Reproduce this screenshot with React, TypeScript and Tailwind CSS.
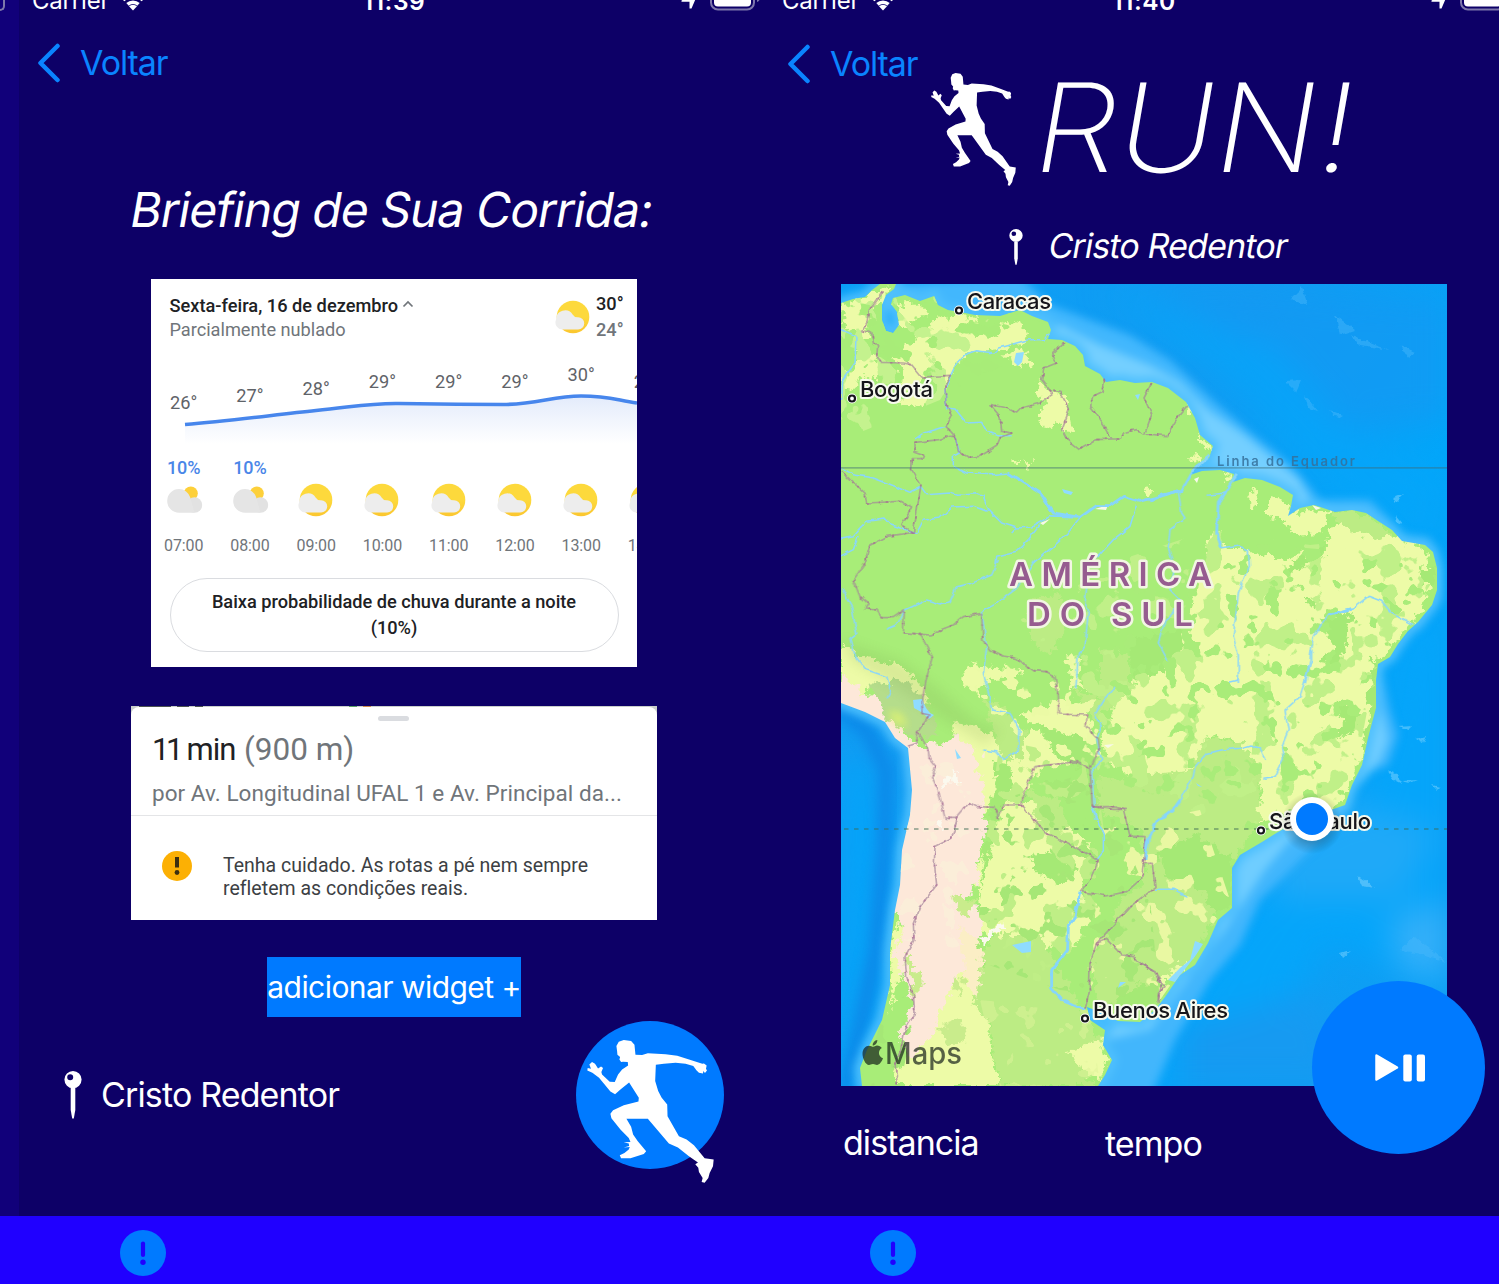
import React from "react";

const RUNNER =
  "M170 125L168 110L175 97L190 92L212 95L222 106L225 136L245 137L262 132L315 135L350 139L390 152L425 163L430 162L438 168L436 178L439 183L433 191L428 185L427 192L415 190L408 183L398 170L375 163L345 160L310 163L286 166L284 215L293 245L303 264L320 285L321 320L355 380L378 390L400 407L432 446L459 450L457 470L447 490L443 505L432 519L423 517L426 505L415 487L413 474L404 464L412 459L385 440L352 414L325 402L262 328L198 328L212 352L218 375L232 395L257 425L250 433L210 446L182 446L178 437L192 430L205 420L208 412L190 414L206 409L205 402L190 398L210 397L205 385L180 360L153 326L150 313L158 302L190 287L234 276L235 265L206 219L180 240L164 254L150 246L116 205L96 190L81 183L82 176L92 178L87 165L95 158L104 163L113 177L122 171L128 176L123 188L125 195L148 217L163 218L173 195L185 180L203 168L202 158L188 157L182 158L177 150L179 143L171 136Z";

function Runner({ className }: { className: string }) {
  return (
    <svg viewBox="80 92 380 428" preserveAspectRatio="none" className={className}>
      <path d={RUNNER} fill="#fff" />
    </svg>
  );
}

function Pin({ className }: { className: string }) {
  return (
    <svg viewBox="0 0 18 48" preserveAspectRatio="none" className={className} fill="#fff">
      <path fillRule="evenodd" d="M9 0a8.6 8.6 0 1 1 0 17.2A8.6 8.6 0 0 1 9 0ZM6.2 3.2a3 3 0 1 0 0 6a3 3 0 0 0 0-6Z" />
      <path d="M6.7 17h4.6v22L9.8 47.5H8.2L6.7 39Z" />
    </svg>
  );
}

function StatusBar({ time }: { time: string }) {
  return (
    <div className="flex h-6 w-[751px] shrink-0 items-start text-white">
      <span className="mt-[-13px] ml-[13px] w-[78px] text-[24px] leading-[28px] tracking-[-0.2px]">Carrier</span>
      <svg viewBox="0 0 28 20" className="ml-[9px] mt-[-9px] h-5 w-7" fill="none" stroke="#fff">
        <path d="M4 9a14 14 0 0 1 20 0" strokeWidth="3.8" />
        <path d="M8.500 13.400a8 8 0 0 1 11 0" strokeWidth="3.6" />
        <path d="M14 19.500l-4-4.300a6 6 0 0 1 8 0z" fill="#fff" stroke="none" />
      </svg>
      <span className="mt-[-13px] ml-[212px] w-[70px] text-center text-[24.500px] font-semibold leading-[28px] tracking-[0.5px]">{time}</span>
      <svg viewBox="0 0 20 20" className="ml-[251px] mt-[-11px] h-5 w-5" fill="#fff">
        <path d="M19 2L11.500 19.500H9.500V12.800H1.500V11.500L19 2z" />
      </svg>
      <svg viewBox="0 0 52 26" className="ml-[10px] mt-[-15px] h-[26px] w-[52px]">
        <rect x="1" y="1" width="43" height="23.500" rx="7" fill="none" stroke="#7d77ab" strokeWidth="2" />
        <rect x="4" y="4" width="37" height="17.500" rx="4" fill="#fff" />
        <path d="M47 8v9q3-1 3-4.500T47 8" fill="#7d77ab" />
      </svg>
    </div>
  );
}

function BackButton() {
  return (
    <div className="flex h-20 shrink-0 items-center text-[#0a84ff]">
      <svg viewBox="0 0 24 40" className="ml-[18px] h-10 w-6" fill="none" stroke="currentColor" strokeWidth="4.500" strokeLinecap="round" strokeLinejoin="round">
        <path d="M20.500 3L3.500 20L20.500 37" />
      </svg>
      <span className="ml-[19px] text-[34px] leading-10 tracking-[-1.1px]">Voltar</span>
    </div>
  );
}

function PartlyCloudy() {
  return (
    <svg viewBox="0 0 36 36" className="size-9 shrink-0">
      <defs>
        <linearGradient id="sun" x1="0" y1="0" x2="0" y2="1">
          <stop offset="0.500" stopColor="#fdd93c" />
          <stop offset="1" stopColor="#fbc62f" />
        </linearGradient>
      </defs>
      <circle cx="18" cy="18" r="16.300" fill="url(#sun)" />
      <path d="M7.600 30.500a7 7 0 0 1-6.500-10a9 9 0 0 1 16.500-5q2 3.200 5.500 2.700a6 6 0 0 1 0 12.300z" fill="#ededed" />
    </svg>
  );
}

function MostlyCloudy() {
  return (
    <svg viewBox="0 0 36 36" className="size-9 shrink-0 overflow-visible">
      <circle cx="24.800" cy="11.500" r="7" fill="#fdd03a" />
      <circle cx="28.500" cy="23" r="7.700" fill="#e2e2e2" />
      <path d="M13 7.100a11.800 11.800 0 0 1 11.300 8.500l4.200 15.100H13a11.800 11.800 0 1 1 0-23.600z" fill="#e5e5e5" />
    </svg>
  );
}

const HOURS = [
  { t: "26°", y: "mt-[42px]", rain: "10%", hour: "07:00", cloudy: true },
  { t: "27°", y: "mt-[35px]", rain: "10%", hour: "08:00", cloudy: true },
  { t: "28°", y: "mt-[28px]", rain: "", hour: "09:00" },
  { t: "29°", y: "mt-[21px]", rain: "", hour: "10:00" },
  { t: "29°", y: "mt-[21px]", rain: "", hour: "11:00" },
  { t: "29°", y: "mt-[21px]", rain: "", hour: "12:00" },
  { t: "30°", y: "mt-[14px]", rain: "", hour: "13:00" },
  { t: "29°", y: "mt-[21px]", rain: "", hour: "14:00" },
];

function WeatherCard() {
  return (
    <section className="ml-[132px] h-[388px] w-[486px] shrink-0 overflow-hidden bg-white font-['Roboto',sans-serif] text-[#202124]">
      <div className="flex h-[71px] pl-[18.500px] pt-[15px]">
        <div>
          <div className="flex items-center text-[18.200px] font-medium leading-[24px] tracking-[0.02px]">
            Sexta-feira, 16 de dezembro
            <svg viewBox="0 0 12 8" className="mb-1 ml-1 h-2 w-3" fill="none" stroke="#70757a" strokeWidth="1.700">
              <path d="M1.500 6.500L6 2L10.500 6.500" />
            </svg>
          </div>
          <div className="text-[18.200px] leading-[23px] tracking-[-0.02px] text-[#70757a]">Parcialmente nublado</div>
        </div>
        <div className="ml-auto flex pr-[13px]">
          <div className="mt-[5px] mr-[5px]"><PartlyCloudy /></div>
          <div className="w-7 text-[18.200px] font-medium leading-[26px] -mt-[3px]">
            <div>30°</div>
            <div className="text-[#70757a]">24°</div>
          </div>
        </div>
      </div>
      <div className="relative h-[215px]">
        <svg viewBox="0 0 486 90" className="absolute left-0 top-6 h-[90px] w-[486px]">
          <defs>
            <linearGradient id="chartFill" x1="0" y1="0" x2="0" y2="1">
              <stop offset="0" stopColor="#e3ebfb" />
              <stop offset="1" stopColor="#ffffff" />
            </linearGradient>
          </defs>
          <path d="M34 50.500C78 47 122 41 165 36.500S220 29 248 29.500S320 30.500 352 30.500C385 30.500 402 22 430 22S465 26 486 29V70H34Z" fill="url(#chartFill)" />
          <path d="M34 50.500C78 47 122 41 165 36.500S220 29 248 29.500S320 30.500 352 30.500C385 30.500 402 22 430 22S465 26 486 29" fill="none" stroke="#4786ec" strokeWidth="3.600" />
        </svg>
        <div className="relative -ml-[0.400px] flex">
          {HOURS.map((h) => (
            <div key={h.hour} className="flex w-[66.250px] shrink-0 flex-col items-center">
              <div className="h-[107px]">
                <div className={`${h.y} text-[18.200px] leading-[22px] text-[#5f6368]`}>{h.t}</div>
              </div>
              <div className="h-[25px] text-[18px] font-medium leading-[22px] text-[#4a86e8]">{h.rain}</div>
              {h.cloudy ? <MostlyCloudy /> : <PartlyCloudy />}
              <div className="mt-[18px] text-[16px] leading-5 tracking-[-0.1px] text-[#70757a]">{h.hour}</div>
            </div>
          ))}
        </div>
      </div>
      <div className="mx-[18.500px] mt-[13px] flex h-[74px] items-center justify-center rounded-full border border-[#dadce0] px-10 text-center text-[18.200px] font-medium leading-[26px]">
        <div className="w-[376px]">Baixa probabilidade de chuva durante a noite (10%)</div>
      </div>
    </section>
  );
}

function RouteCard() {
  return (
    <section className="ml-[112px] mt-[39px] h-[214px] w-[526px] shrink-0 overflow-hidden bg-[#c9cfcb] font-['Roboto',sans-serif]">
      <div className="flex h-px gap-1.5 pl-2">
        <i className="w-8 bg-[#4b5250]" />
        <i className="w-3 bg-[#4b5250]" />
        <i className="w-2 bg-[#4b5250]" />
        <i className="ml-[140px] w-2 bg-[#58a065]" />
        <i className="w-2 bg-[#d08a4a]" />
      </div>
      <div className="h-[213px] rounded-t-[8px] bg-white">
        <div className="flex h-[109px] flex-col border-b border-[#e4e5e7] pl-[21px] pt-[9px]">
          <div className="ml-[226px] h-[5px] w-[31px] rounded-full bg-[#dadce0]" />
          <div className="mt-[11px] flex text-[31px] leading-[36px] text-[#202124]">
            <span className="w-[92px] whitespace-nowrap tracking-[-1px]">
              <span className="tracking-[-3.500px]">11</span> min
            </span>
            <span className="whitespace-nowrap text-[31.500px] text-[#70757a]">(900 m)</span>
          </div>
          <div className="mt-[11px] whitespace-nowrap text-[22.500px] leading-[28px] tracking-[0.05px] text-[#70757a]">
            por Av. Longitudinal UFAL 1 e Av. Principal da...
          </div>
        </div>
        <div className="flex pl-[31px] pt-[35px]">
          <svg viewBox="0 0 30 30" className="size-[30px]">
            <circle cx="15" cy="15" r="15" fill="#fcb004" />
            <path d="M13 6h4v10.500h-4z" fill="#3c2f10" />
            <circle cx="15" cy="21.500" r="2.400" fill="#3c2f10" />
          </svg>
          <p className="ml-[31px] mt-[3px] whitespace-nowrap text-[19.500px] leading-[23px] tracking-[0.02px] text-[#3c4043]">
            Tenha cuidado. As rotas a pé nem sempre
            <br />
            refletem as condições reais.
          </p>
        </div>
      </div>
    </section>
  );
}

function TabBar() {
  return (
    <footer className="mt-auto flex h-[68px] shrink-0 items-center bg-[#2000ff]">
      <svg viewBox="0 0 46 46" className="ml-[101px] mt-1.5 size-[46px]">
        <circle cx="23" cy="23" r="23" fill="#007aff" />
        <path d="M23 13.500v11.500" stroke="#2000ff" strokeWidth="4.200" strokeLinecap="round" />
        <circle cx="23" cy="32.300" r="2.700" fill="#2000ff" />
      </svg>
    </footer>
  );
}

const COAST =
  "M841 303L853 299L865 297L872 290L880 284L896 284L894 289L886 295L882 305L882 320L886 331L893 333L899 325L897 312L891 304L893 298L905 295L920 301L934 296L938 305L948 310L960 312L975 315L1000 316L1020 310L1032 316L1048 322L1051 330L1048 339L1062 340L1075 346L1083 355L1085 366L1100 374L1106 382L1120 380L1135 383L1152 382L1168 388L1186 402L1195 418L1200 435L1213 446L1209 458L1196 465L1190 475L1202 471L1220 470L1234 474L1233 482L1245 478L1262 480L1280 487L1293 495L1291 506L1288 516L1300 508L1314 505L1335 512L1352 510L1366 513L1378 521L1392 530L1402 541L1425 545L1433 552L1437 568L1437 590L1432 605L1418 622L1408 631L1398 644L1390 657L1378 664L1376 680L1376 708L1368 738L1362 765L1352 785L1345 805L1328 811L1310 815L1278 832L1262 842L1240 855L1232 868L1232 908L1218 920L1208 943L1195 965L1180 975L1165 997L1155 1010L1140 1022L1118 1021L1100 1012L1087 1007L1090 1020L1105 1030L1103 1045L1112 1060L1105 1075L1098 1086L862 1086L860 1068L867 1050L882 1020L890 985L890 950L895 910L900 885L902 850L910 815L912 790L908 748L895 738L885 722L865 712L841 703Z";

/* Each group holds lines traced on a 3x grid, anchored at the given map origin. */
const TILES = [
  {
    at: "translate(840 283) scale(0.33333)",
    borders:
      "M130 25L105 60L88 80L85 110L68 143L95 150L100 180L113 190L110 220L125 238L190 240L215 245L245 282L330 277L315 310L318 360L335 400L318 430L345 460L355 505L385 523L420 520L470 490L480 465L515 450L485 445L480 400L450 365L500 375L530 390L545 375L600 360L640 335L605 290L612 255L650 240L635 215L650 200L672 178M640 322L660 325L688 380L665 440L680 470L718 500L770 470L820 468L845 468L850 450L890 440L910 453L980 458L1015 400L1040 370M793 290L790 325L758 340L752 370L775 400L795 430L815 467M935 300L912 345L935 395L915 450M345 460L330 460L300 470L225 478L225 505L255 515L250 527L217 527L215 560L243 605L220 750L185 728L215 675L180 655L80 660L75 630L30 590L5 565M220 748L140 760L90 785L75 840",
    rivers:
      "M628 152L615 170L565 170L475 195L460 210L410 203L375 215L350 240L332 277L315 320L320 375L345 378L380 420L425 418L440 445L470 458L515 458M5 555L40 575L100 585L140 600L210 628L243 612L260 635L330 630L350 637L410 632L430 640L445 680L485 720L530 735L575 732L630 700M318 430L250 450L225 468M345 460L358 510L340 520L340 550L380 570L450 575L505 570M0 765L40 758L55 740L80 715L135 708L150 725L180 735L230 750L250 712L300 705L335 672L400 670L440 685M0 820L40 800L55 760M720 703L680 755L640 790L580 840M890 665L870 730L820 770L770 825M5 140L48 160L45 240L8 290L5 350M600 725L565 770L530 805L470 820L468 845M530 735L515 750",
    wide: "M505 570L560 605L600 630L640 690L720 703M630 700L720 703L770 668L810 668L850 640L900 655L960 640L1020 622",
  },
  {
    at: "translate(1150 283) scale(0.33333)",
    borders: "",
    rivers:
      "M85 625L95 690L105 705L60 740L55 790L70 850L60 920L90 950L70 990L45 1010L25 1080L55 1135M215 795L260 787L295 800L298 850L285 880L265 930L250 1060L265 1120L265 1200M170 637L225 630M790 1025L720 985L695 955L655 940L610 975L535 995L490 1060L480 1130L465 1200",
    wide: "M0 655L40 635L95 622L130 560L180 515M260 575L205 660L200 750L215 795M535 995L605 977",
  },
  {
    at: "translate(840 560) scale(0.33333)",
    borders:
      "M75 10L40 60L60 110L85 130L75 147L115 150L122 173L160 173L193 150L190 218L270 225L300 210L340 195L370 170L425 160L428 240L450 270L490 288L530 295L580 332L620 335L645 350L655 408L655 462L742 465L738 500L775 540L778 565L750 630M238 218L277 290L262 345L250 400L245 460L270 465L233 515L262 560L268 595L288 620L275 650L295 690L315 775L345 775L385 728L410 740L465 742L472 775L488 735L543 735L565 665L585 620L710 605L750 630L757 740L820 748L860 748M233 515L230 550L205 558",
    rivers:
      "M475 0L455 45L400 68L350 80L330 125L300 132L260 120L195 150L170 195L140 208M585 0L560 40L530 85L470 130L425 155L440 260L430 340L445 400L455 450L510 460L540 510L535 570L490 600L470 575L430 570M740 80L735 130L745 150L735 260L715 280L707 390M825 380L790 420L765 460L783 500L770 540L785 600L755 635L760 700L765 780M5 85L35 140L50 220L30 235L40 280L75 328L140 350L152 390L140 415",
    wide: "",
  },
  {
    at: "translate(840 800) scale(0.33333)",
    borders:
      "M345 55L350 65L335 115L285 140L283 190L290 255L240 320L220 370L222 420L195 470L200 530L220 585L225 640L195 690L180 760L165 790L172 855M543 15L620 100L720 150L775 180L750 240L725 275L800 288L860 275L905 235L910 190L940 190L948 260L870 320L770 430L750 490L748 575L735 630M757 20L820 20L850 28L870 108L918 110L910 190M770 430L800 418L845 465L880 470L940 515L965 550L953 605",
    rivers: "M755 20L790 100L790 155L770 180M635 565L670 605L735 630M945 268L1000 268L1045 290",
    wide: "M720 275L705 350L685 380L683 450L635 510L635 565L665 600M735 630L670 600M920 120L915 180",
  },
  {
    at: "translate(1140 650) scale(0.33333)",
    borders: "M0 940L45 965L75 1010L55 1030L58 1060",
    rivers:
      "M515 0L515 30L480 140L435 180L445 240L425 290L430 330L405 380L370 385M375 330L360 295L330 285L300 295L245 300L200 310L165 350L160 380L130 430L110 470M265 97L295 90",
    wide: "M120 450L105 472L50 515L25 570L15 620",
  },
];

const YELLOW = [
  "M841 306L853 302L868 296L885 285L894 287L885 295L872 312L868 330L858 352L852 340L845 325Z",
  "M898 306L920 303L926 315L912 322L900 328Z",
  "M841 365L850 375L868 352L880 362L876 385L862 372L850 392L841 390Z",
  "M897 356L920 333L940 318L957 313L976 318L967 333L997 336L1000 323L1023 325L1030 341L1000 348L970 351L957 363L950 375L945 392L910 408L900 403L902 378Z",
  "M1002 355L1022 350L1033 360L1020 368Z",
  "M1038 380L1053 393L1065 395L1070 415L1073 430L1062 432L1058 420L1045 428L1040 413L1046 402L1037 392Z",
  "M1012 459L1020 460L1018 465ZM1023 463L1032 461L1030 467Z",
  "M1188 404L1194 406L1196 418L1189 412ZM1198 432L1210 445L1202 449ZM1190 456L1202 455L1196 464Z",
  "M1222 472L1234 474L1228 483ZM1247 492L1258 489L1257 505L1246 507ZM1268 495L1283 500L1296 515L1305 508L1330 513L1320 533L1295 535L1285 520L1268 517Z",
  "M1142 490L1155 488L1150 498Z",
  "M1208 540L1218 530L1225 548L1250 548L1260 556L1285 558L1305 550L1326 555L1330 528L1345 522L1370 520L1392 535L1425 550L1432 580L1420 612L1392 645L1375 665L1370 740L1355 772L1340 805L1290 818L1255 825L1262 795L1255 760L1240 742L1210 735L1195 775L1160 790L1135 778L1108 760L1100 745L1112 715L1118 685L1160 675L1175 650L1190 610L1196 580L1206 570Z",
  "M961 680L975 660L983 672L1016 666L1020 675L985 682L975 695Z",
  "M1068 655L1080 658L1078 680L1088 690L1072 688Z",
  "M1060 698L1085 705L1095 740L1085 745L1050 730L1020 715L1040 712Z",
  "M1008 760L1030 730L1050 740L1075 762L1040 768L1020 800L1060 820L1095 850L1080 890L1068 930L1045 955L1010 940L980 930L975 880L985 850L1000 820Z",
  "M841 642L855 655L880 662L905 668L920 685L930 705L918 700L890 680L870 690L855 700L841 695Z",
  "M950 720L975 725L1000 740L1005 760L995 790L985 815L970 800L965 760Z",
  "M1155 835L1180 825L1185 838L1165 862L1160 880L1155 870ZM1195 880L1212 895L1205 912L1192 895ZM1140 958L1165 940L1190 945L1188 962L1165 985L1150 975ZM1075 890L1090 910L1080 940L1060 955L1062 925Z",
  "M895 1075L925 1000L965 950L978 990L990 1035L998 1086L895 1086ZM1065 1045L1100 1040L1108 1060L1100 1080L1075 1065Z",
  "M892 940L900 920L905 945L900 980L890 1010Z",
];

const MID = [
  "M985 700L1005 710L1025 730L1020 760L1000 755Z",
  "M1075 690L1100 700L1100 650L1130 655L1130 690L1098 720L1090 715Z",
  "M1095 780L1190 770L1205 740L1240 742L1258 765L1260 822L1220 880L1220 905L1190 960L1150 985L1140 1015L1100 1010L1090 960L1120 905L1150 870L1140 830L1100 810Z",
  "M975 960L1000 935L1040 935L1075 1000L1090 1020L1102 1040L1070 1050L1095 1086L1000 1086L992 1030L972 1000Z",
  "M1030 600L1060 590L1065 630L1050 655L1030 640Z",
  "M1330 512L1355 510L1378 522L1392 535L1380 540L1350 530Z",
  "M1030 790L1060 800L1070 830L1040 830Z",
];

const FOREST = [
  "M1285 575L1295 560L1325 545L1322 558ZM1420 568L1434 570L1432 585L1422 585ZM1305 598L1320 596L1322 603L1308 605ZM1372 655L1378 665L1376 735L1368 730ZM1362 745L1376 690L1378 710L1368 760Z",
  "M1335 700L1362 715L1358 730L1335 740L1345 720ZM1320 620L1355 612L1350 625L1342 660ZM1320 660L1340 640L1345 670ZM1155 850L1200 835L1232 860L1232 905L1215 915L1200 890L1170 880ZM1110 1005L1140 985L1165 992L1140 1020Z",
  "M995 760L1012 770L1010 800L998 815L990 860L978 900L972 950L985 970L978 900L990 820ZM1032 855L1060 848L1080 868L1060 885L1035 872ZM1045 780L1085 785L1070 800L1048 795Z",
  "M1040 725L1088 740L1095 765L1080 770L1050 750ZM1130 640L1180 630L1190 645L1160 675L1135 680Z",
];

function MapArt() {
  return (
    <svg viewBox="841 284 606 802" className="absolute inset-0 h-full w-full" fontFamily="Inter, sans-serif">
      <defs>
        <linearGradient id="sea" x1="0" y1="0" x2="1" y2="1">
          <stop offset="0" stopColor="#0aa0f6" />
          <stop offset="0.350" stopColor="#129bf2" />
          <stop offset="0.600" stopColor="#02a6fa" />
          <stop offset="1" stopColor="#149bf1" />
        </linearGradient>
        <clipPath id="land"><path d={COAST} /></clipPath>
        <filter id="softWide" x="-30%" y="-30%" width="160%" height="160%" colorInterpolationFilters="sRGB"><feGaussianBlur stdDeviation="16" /></filter>
        <filter id="soft" x="-20%" y="-20%" width="140%" height="140%" colorInterpolationFilters="sRGB"><feGaussianBlur stdDeviation="6" /></filter>
        <filter id="softSmall" x="-20%" y="-20%" width="140%" height="140%" colorInterpolationFilters="sRGB"><feGaussianBlur stdDeviation="4" /></filter>
        <filter id="rough" x="-5%" y="-5%" width="110%" height="110%">
          <feTurbulence type="fractalNoise" baseFrequency="0.110" numOctaves="3" seed="4" />
          <feDisplacementMap in="SourceGraphic" scale="15" xChannelSelector="R" yChannelSelector="G" />
        </filter>
        <filter id="jag" x="-5%" y="-5%" width="110%" height="110%" colorInterpolationFilters="sRGB">
          <feTurbulence type="fractalNoise" baseFrequency="0.200" numOctaves="2" seed="9" />
          <feDisplacementMap in="SourceGraphic" scale="5" xChannelSelector="R" yChannelSelector="G" />
        </filter>
        <filter id="wobble" filterUnits="userSpaceOnUse" x="800" y="260" width="700" height="850" colorInterpolationFilters="sRGB">
          <feTurbulence type="fractalNoise" baseFrequency="0.140" numOctaves="1" seed="2" />
          <feDisplacementMap in="SourceGraphic" scale="5" xChannelSelector="R" yChannelSelector="G" />
        </filter>
        <filter id="speckA" x="0" y="0" width="100%" height="100%" colorInterpolationFilters="sRGB">
          <feTurbulence type="fractalNoise" baseFrequency="0.050" numOctaves="3" seed="11" />
          <feColorMatrix values="0 0 0 0 0  0 0 0 0 0  0 0 0 0 0  40 0 0 0 -25" result="m" />
          <feComposite in="SourceGraphic" in2="m" operator="in" />
        </filter>
        <filter id="speckB" x="0" y="0" width="100%" height="100%" colorInterpolationFilters="sRGB">
          <feTurbulence type="fractalNoise" baseFrequency="0.040" numOctaves="3" seed="27" />
          <feColorMatrix values="0 0 0 0 0  0 0 0 0 0  0 0 0 0 0  0 40 0 0 -24" result="m" />
          <feComposite in="SourceGraphic" in2="m" operator="in" />
        </filter>
        <radialGradient id="pinShadow">
          <stop offset="0.600" stopColor="#000" stopOpacity="0.220" />
          <stop offset="1" stopColor="#000" stopOpacity="0" />
        </radialGradient>
      </defs>

      <rect x="841" y="284" width="606" height="802" fill="url(#sea)" />
      <g filter="url(#softWide)">
        <path d="M1150 284L1447 300L1447 420L1330 430L1250 360Z" fill="#1499f2" opacity="0.700" />
        <path d="M1100 284L1180 350L1250 400L1320 480L1400 540L1440 545L1447 480L1340 420L1280 350Z" fill="#05a5fa" opacity="0.700" />
        <path d="M1395 640L1447 600L1447 1000L1330 940L1230 1086L1110 1086L1250 900L1360 840Z" fill="#05a5fa" />
        <path d="M1250 850L1350 800L1440 830L1400 900L1280 900Z" fill="#1fa9f8" />
        <path d="M1390 920L1447 900L1447 980L1400 970Z" fill="#36b0f9" />
        <path d="M1180 1030L1320 990L1350 1086L1180 1086Z" fill="#169af1" />
        <path d="M841 760L870 760L885 830L870 960L841 1030Z" fill="#04a4f9" />
      </g>
      <path d="M835 706L868 732L886 770L884 850L876 950L862 1020L845 1090" fill="none" stroke="#0c8ae9" strokeWidth="15" filter="url(#soft)" />
      <g filter="url(#softSmall)">
        <path d="M900 284L1020 276L1050 305L1130 335L1170 360L1215 402L1250 432L1285 460L1300 475L1320 500L1370 500L1405 535L1430 538L1442 570L1442 600L1420 630L1300 560L1100 400L900 330Z" fill="#42b7fd" />
        <path d="M1030 325L1060 325L1100 345L1150 365L1180 382L1208 410L1245 435L1275 460L1298 478L1310 500L1300 520L1200 480L1150 400Z" fill="#74cfff" />
        <path d="M1380 665L1390 710L1398 735L1388 765L1360 775L1350 810L1290 870L1260 900L1240 945L1210 980L1175 1040L1150 1100L1080 1100L1110 1010L1230 860Z" fill="#42b6fc" />
        <path d="M1378 690L1388 740L1380 760L1355 790L1290 840L1265 870L1245 900L1225 930L1195 970L1150 1030L1105 1040L1240 855Z" fill="#6fcdff" />
        <path d={COAST} fill="none" stroke="#4fc0fd" strokeWidth="11" />
      </g>
      <g fill="#4ab9fb" opacity="0.450" filter="url(#jag)">
        <path d="M1290 300L1302 288L1308 305ZM1335 315L1355 330L1340 335ZM1350 335L1375 345L1390 350L1360 345ZM1400 345L1415 352L1408 358ZM1285 381L1301 380L1296 392ZM1305 395L1318 411L1308 408ZM1330 410L1342 415L1337 418Z" />
        <path d="M1392 498L1404 494L1396 502ZM1382 490L1388 486ZM1395 515L1402 524L1397 522ZM1398 727L1412 726L1408 730ZM1416 739L1426 736L1423 743ZM1387 770L1396 774L1402 784L1394 780ZM1402 781L1418 780L1410 783ZM1432 785L1440 787L1437 790ZM1357 875L1375 888L1362 886ZM1320 915L1328 923ZM1340 954L1350 951L1342 958Z" fill="#8edaff" />
        <path d="M1400 950L1415 936L1425 945L1447 962L1425 955Z" />
      </g>

      <g clipPath="url(#land)">
        <g filter="url(#jag)">
          <path d={COAST} fill="#a8ed78" stroke="#a8ed78" strokeWidth="6" />
          <g filter="url(#rough)">
            {YELLOW.map((d) => <path key={d} d={d} fill="#edfba7" />)}
            {MID.map((d) => <path key={d} d={d} fill="#bcec84" />)}
            {FOREST.map((d) => <path key={d} d={d} fill="#a5e975" />)}
            <path d="M841 675L865 695L885 690L895 720L912 745L935 745L955 735L972 745L980 775L985 810L978 880L965 900L985 915L975 950L950 990L935 1030L912 1060L898 1040L912 1000L895 960L903 925L890 905L880 870L888 800L890 755L870 730L835 715Z" fill="#fde8d9" />
            <path d="M938 770L955 768L958 782L945 785ZM1000 920L1002 930L985 945L980 940ZM935 823L943 822L940 832Z" fill="#fbf9ee" />
            <path d="M948 895L975 900L968 920L955 905ZM905 950L925 985L915 995ZM955 975L965 980L960 995L950 985ZM935 1030L960 1020L968 1040L950 1045Z" fill="#c9ec8c" />
            <path d="M870 685L905 680L925 700L940 735L915 738L888 720Z" fill="#b5dd8b" />
            <path d="M960 925L972 935L985 955L975 1000L965 980Z" fill="#fbeec5" />
          </g>
        </g>
        <g filter="url(#speckB)">
          <path d="M1120 560L1210 530L1310 545L1400 535L1440 570L1375 670L1350 800L1250 830L1100 780L1080 700L1020 620Z" fill="#c0f088" />
          <path d="M1000 740L1095 760L1110 880L1060 990L975 960L985 850Z" fill="#bfee86" />
          <path d="M1100 830L1200 810L1230 900L1160 1000L1090 1000Z" fill="#e9f8a2" />
          <path d="M841 284H1010L940 400L841 440Z" fill="#c4f28e" />
          <path d="M862 1086L890 990L920 990L900 1086Z" fill="#a5e776" />
        </g>
        <g filter="url(#speckA)">
          <path d="M1120 600L1210 540L1330 550L1400 545L1440 570L1375 670L1350 800L1250 830L1110 780L1100 700Z" fill="#a9ec79" />
          <path d="M1000 800L1095 770L1150 900L1160 1000L1060 990L975 960L985 850Z" fill="#a6e776" />
          <path d="M960 660L1095 660L1110 770L1000 740Z" fill="#ebfaa5" />
          <path d="M900 310L1040 310L1030 350L940 400L870 400L841 360V300Z" fill="#a8ec78" />
          <path d="M980 1000L1090 1010L1100 1086H1000Z" fill="#ddf39a" opacity="0.500" />
          <path d="M895 760L985 750L970 950L900 940Z" fill="#fbeed9" />
        </g>
        <path d="M841 640L900 660L940 690L975 720L1000 730L985 745L935 715L900 690L850 660Z" fill="#79a04e" opacity="0.160" filter="url(#soft)" />
        <path d="M888 710L902 714L908 728L893 722Z" fill="#e6f76d" opacity="0.800" filter="url(#softSmall)" />
        <g fill="#8fdcff">
          <path d="M913 700L922 699L926 708L930 713L934 715L929 719L923 713L914 708ZM955 749L961 758L957 759ZM1012 945L1031 941V952L1022 953ZM1016 353L1024 352L1022 362L1018 366L1014 362ZM1062 489L1073 492L1071 495L1064 493ZM1135 395L1140 394L1138 400ZM1120 982L1126 982L1118 988ZM1196 783L1202 787L1198 786Z" />
          <path d="M1195 941L1203 944L1196 955L1182 973L1175 982L1168 980L1180 968L1190 960Z" />
        </g>
        <g fill="#f7f8e9">
          <path d="M1095 509L1108 505L1106 510ZM1040 523L1050 519L1043 525ZM1194 479L1199 477L1197 483ZM1104 745L1114 744L1108 748ZM1312 505L1321 508L1316 510Z" />
        </g>
      </g>

      <g filter="url(#wobble)">
        {TILES.map((t) => (
          <g key={t.at} transform={t.at} fill="none" strokeLinejoin="round">
            <path d={t.rivers} stroke="#8ad6fb" strokeWidth="4.600" />
            <path d={t.wide} stroke="#86d5fb" strokeWidth="8.500" />
            <path d={t.borders} stroke="#a3829a" strokeWidth="5" opacity="0.650" />
            <path d={t.borders} stroke="#a3558f" strokeWidth="6" strokeDasharray="7 17 4 30" opacity="0.450" />
          </g>
        ))}
      </g>

      <path d="M841 467.800H1447" stroke="#3d6b77" strokeWidth="1.200" opacity="0.600" />
      <path d="M844 829H1447" stroke="#3d6b55" strokeWidth="2" strokeDasharray="4.500 5.500" opacity="0.450" />

      <g fill="#36709b" fontSize="13" opacity="0.850">
        <text x="1217" y="465.500" textLength="138" fontWeight="600">Linha do Equador</text>
      </g>
      <g fill="#965c90" stroke="#f3f6e4" strokeWidth="5" strokeLinejoin="round" paintOrder="stroke" fontSize="33" fontWeight="600">
        <text x="1009" y="585.500" textLength="203">AMÉRICA</text>
        <text x="1027" y="626" textLength="166">DO SUL</text>
      </g>
      <g fill="#15151a" stroke="#f7faee" strokeWidth="4" strokeLinejoin="round" paintOrder="stroke" fontSize="22" fontWeight="500">
        <text x="967" y="308.500" textLength="84">Caracas</text>
        <text x="860" y="397" textLength="73">Bogotá</text>
        <text x="1269" y="828.500" textLength="102">São Paulo</text>
        <text x="1093" y="1017.500" textLength="135">Buenos Aires</text>
      </g>
      {[[959, 310.500], [852, 398.500], [1261, 830.500], [1085, 1018.500]].map(([x, y]) => (
        <g key={x}>
          <circle cx={x} cy={y} r="5" fill="#fff" />
          <circle cx={x} cy={y} r="3" fill="#fff" stroke="#15151a" strokeWidth="2.200" />
        </g>
      ))}

      <g fill="#16201a" opacity="0.700">
        <g transform="translate(862.500 1040)">
          <path d="M14.500 5.500C16.500 5.500 18.300 6.500 19.300 8C15 10.500 15.700 16.500 20.500 18.300C19.300 21.500 17 25 14.500 25C13 25 12.300 24 10.500 24C8.500 24 8 25 6.500 25C3 25 0 18.500 0 13.800C0 8.800 3.200 5.700 6.500 5.700C8.300 5.700 9.600 6.800 10.700 6.800C11.800 6.800 13 5.500 14.500 5.500Z" />
          <path d="M14.800 0C15 2.800 12.900 5.500 10.200 5.500C10 2.800 12.200.300 14.800 0Z" />
        </g>
        <text x="885" y="1064" fontSize="30.500" fontWeight="500" textLength="77" lengthAdjust="spacingAndGlyphs">Maps</text>
      </g>

      <circle cx="1312" cy="823" r="31" fill="url(#pinShadow)" />
      <circle cx="1312" cy="819" r="22" fill="#fff" />
      <circle cx="1312" cy="819" r="16" fill="#007aff" />
    </svg>
  );
}

function BriefingScreen() {
  return (
    <main className="flex h-[1284px] w-[750px] shrink-0 flex-col bg-[#0d0067]">
      <StatusBar time="11:39" />
      <div className="-mt-px shrink-0"><BackButton /></div>
      <h1 className="mt-[77px] h-[99px] shrink-0 pl-[112px] text-[48px] leading-[60px] text-white">
        <span className="inline-block -skew-x-[10deg] whitespace-nowrap tracking-[-0.950px]">Briefing de Sua Corrida:</span>
      </h1>
      <WeatherCard />
      <RouteCard />
      <button className="ml-[248px] mt-[37px] h-[60px] w-[254px] shrink-0 whitespace-nowrap bg-[#007aff] text-[30px] leading-[60px] tracking-[-0.550px] text-white">
        adicionar widget +
      </button>
      <div className="mt-1 flex h-[170px] shrink-0 text-white">
        <Pin className="ml-[44.500px] mt-[50px] h-12 w-[18px]" />
        <span className="ml-[19.500px] mt-[54px] w-[240px] whitespace-nowrap text-[34px] leading-10 tracking-[-0.850px]">Cristo Redentor</span>
        <div className="ml-[235px] h-[148px] w-[148px] rounded-full bg-[#007aff]">
          <Runner className="ml-[11px] mt-[19px] h-[143px] w-[127px]" />
        </div>
      </div>
      <TabBar />
    </main>
  );
}

function RunScreen() {
  return (
    <main className="flex h-[1284px] w-[730px] shrink-0 flex-col overflow-hidden bg-[#0d0067]">
      <StatusBar time="11:40" />
      <div className="flex h-[172px] shrink-0">
        <div className="w-[162px] shrink-0 whitespace-nowrap"><BackButton /></div>
        <Runner className="mt-[49px] h-[113px] w-[85px] shrink-0" />
        <span className="ml-[20px] mt-[29px] inline-block h-[150px] origin-left scale-x-[1.090] -skew-x-[9deg] whitespace-nowrap text-[123px] font-[250] leading-[150px] text-white [font-optical-sizing:none]">RUN!</span>
      </div>
      <div className="mt-[30px] flex h-[58px] shrink-0 text-white">
        <Pin className="ml-[240px] mt-[3px] h-9 w-[14px]" />
        <span className="ml-[26px] inline-block h-10 -skew-x-[10deg] whitespace-nowrap text-[34px] leading-10 tracking-[-0.850px]">Cristo Redentor</span>
      </div>
      <div className="relative ml-[72px] h-[802px] w-[606px] shrink-0">
        <MapArt />
        <button className="absolute left-[471px] top-[697px] flex size-[173px] items-center justify-center rounded-full bg-[#007aff]">
          <svg viewBox="0 0 50 28" className="ml-0.5 h-7 w-[50px]" fill="#fff">
            <path d="M1.500 1.500L22 13.500L1.500 25.500Z" stroke="#fff" strokeWidth="2.500" strokeLinejoin="round" />
            <rect x="28.300" y="0.500" width="8.500" height="27" rx="2" />
            <rect x="41.700" y="0.500" width="8.300" height="27" rx="2" />
          </svg>
        </button>
      </div>
      <div className="mt-[37px] flex text-[34px] leading-10 text-white">
        <span className="ml-[74px] w-[262px] tracking-[-0.950px]">distancia</span>
        <span className="mt-px tracking-[-0.950px]">tempo</span>
      </div>
      <TabBar />
    </main>
  );
}

export default function App() {
  return (
    <div className="flex h-[1284px] w-[1499px] overflow-hidden font-['Inter',sans-serif]">
      <div className="flex w-[19px] shrink-0 flex-col bg-[#11007a]">
        <div className="h-[11px] w-[5px] rounded-br-[8px] border-b-2 border-r-2 border-[#7d77ab]" />
        <div className="mt-auto h-[68px] bg-[#2000ff]" />
      </div>
      <BriefingScreen />
      <RunScreen />
    </div>
  );
}
